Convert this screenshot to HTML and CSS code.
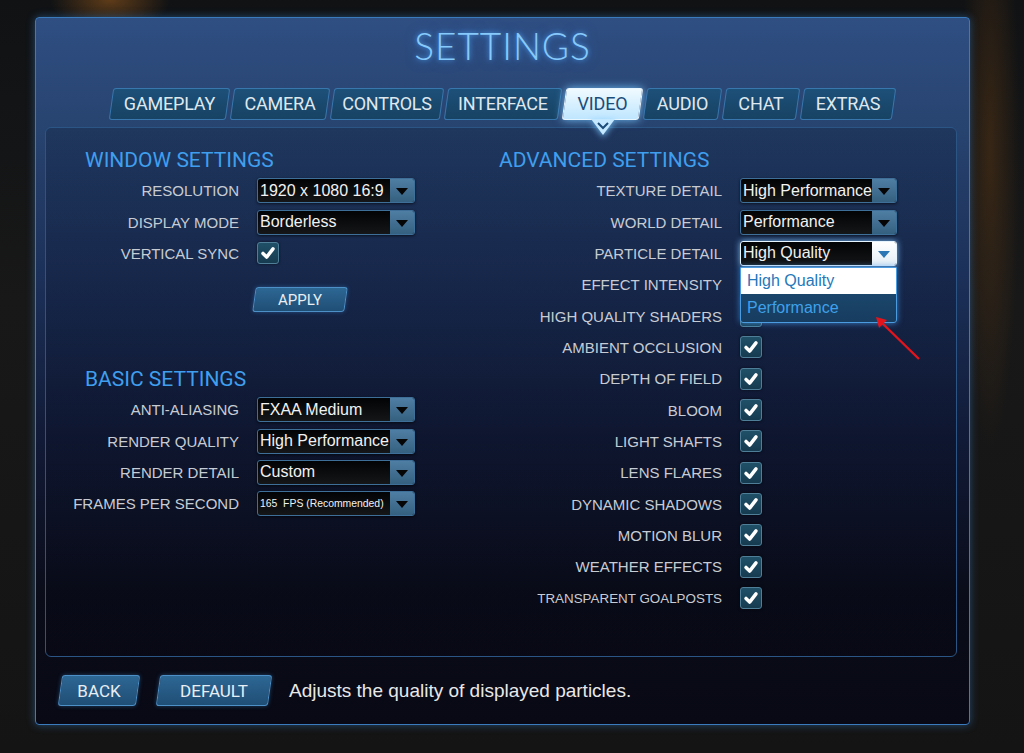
FILE: index.html
```html
<!DOCTYPE html>
<html lang="en">
<head>
    <meta charset="UTF-8">
    <meta name="viewport" content="width=device-width, initial-scale=1.0">
    <title>Settings</title>
    <link rel="stylesheet" href="styles.css">
</head>
<body>

<div class="window">
    <h1 class="title">SETTINGS</h1>

    <!-- Tabs -->
    <div class="tabs">
        <div class="tab" style="width:117px">GAMEPLAY</div>
        <div class="tab" style="width:96px">CAMERA</div>
        <div class="tab" style="width:110px">CONTROLS</div>
        <div class="tab" style="width:114px">INTERFACE</div>
        <div class="tab active" style="width:77px">VIDEO
            <svg class="notch" viewBox="0 0 24 16" width="24" height="16">
                <polygon points="0,0 24,0 12,16"/>
                <polyline points="7,4 12,9 17,4"/>
            </svg>
        </div>
        <div class="tab" style="width:75px">AUDIO</div>
        <div class="tab" style="width:74px">CHAT</div>
        <div class="tab" style="width:92px">EXTRAS</div>
    </div>

    <!-- Panel -->
    <div class="panel">
        <div class="column left">
            <h2 class="heading">WINDOW SETTINGS</h2>
            <div class="row"><span class="label">RESOLUTION</span><div class="select"><span>1920 x 1080 16:9</span><i class="arrow"></i></div></div>
            <div class="row"><span class="label">DISPLAY MODE</span><div class="select"><span>Borderless</span><i class="arrow"></i></div></div>
            <div class="row"><span class="label">VERTICAL SYNC</span><div class="check"><svg viewBox="0 0 22 22"><path d="M5.5 11.5 L9.5 15.5 L16.5 6.5"/></svg></div></div>
            <div class="apply-wrap"><button class="btn apply">APPLY</button></div>

            <h2 class="heading basic">BASIC SETTINGS</h2>
            <div class="row"><span class="label">ANTI-ALIASING</span><div class="select"><span>FXAA Medium</span><i class="arrow"></i></div></div>
            <div class="row"><span class="label">RENDER QUALITY</span><div class="select"><span>High Performance</span><i class="arrow"></i></div></div>
            <div class="row"><span class="label">RENDER DETAIL</span><div class="select"><span>Custom</span><i class="arrow"></i></div></div>
            <div class="row"><span class="label">FRAMES PER SECOND</span><div class="select small"><span>165&nbsp; FPS (Recommended)</span><i class="arrow"></i></div></div>
        </div>

        <div class="column right">
            <h2 class="heading">ADVANCED SETTINGS</h2>
            <div class="row"><span class="label">TEXTURE DETAIL</span><div class="select"><span>High Performance</span><i class="arrow"></i></div></div>
            <div class="row"><span class="label">WORLD DETAIL</span><div class="select"><span>Performance</span><i class="arrow"></i></div></div>
            <div class="row">
                <span class="label">PARTICLE DETAIL</span>
                <div class="select open">
                    <span>High Quality</span><i class="arrow"></i>
                    <div class="options">
                        <div class="option selected">High Quality</div>
                        <div class="option hover">Performance</div>
                    </div>
                </div>
            </div>
            <div class="row"><span class="label">EFFECT INTENSITY</span><div class="select"><span></span><i class="arrow"></i></div></div>
            <div class="row"><span class="label">HIGH QUALITY SHADERS</span><div class="check"><svg viewBox="0 0 22 22"><path d="M5.5 11.5 L9.5 15.5 L16.5 6.5"/></svg></div></div>
            <div class="row"><span class="label">AMBIENT OCCLUSION</span><div class="check"><svg viewBox="0 0 22 22"><path d="M5.5 11.5 L9.5 15.5 L16.5 6.5"/></svg></div></div>
            <div class="row"><span class="label">DEPTH OF FIELD</span><div class="check"><svg viewBox="0 0 22 22"><path d="M5.5 11.5 L9.5 15.5 L16.5 6.5"/></svg></div></div>
            <div class="row"><span class="label">BLOOM</span><div class="check"><svg viewBox="0 0 22 22"><path d="M5.5 11.5 L9.5 15.5 L16.5 6.5"/></svg></div></div>
            <div class="row"><span class="label">LIGHT SHAFTS</span><div class="check"><svg viewBox="0 0 22 22"><path d="M5.5 11.5 L9.5 15.5 L16.5 6.5"/></svg></div></div>
            <div class="row"><span class="label">LENS FLARES</span><div class="check"><svg viewBox="0 0 22 22"><path d="M5.5 11.5 L9.5 15.5 L16.5 6.5"/></svg></div></div>
            <div class="row"><span class="label">DYNAMIC SHADOWS</span><div class="check"><svg viewBox="0 0 22 22"><path d="M5.5 11.5 L9.5 15.5 L16.5 6.5"/></svg></div></div>
            <div class="row"><span class="label">MOTION BLUR</span><div class="check"><svg viewBox="0 0 22 22"><path d="M5.5 11.5 L9.5 15.5 L16.5 6.5"/></svg></div></div>
            <div class="row"><span class="label">WEATHER EFFECTS</span><div class="check"><svg viewBox="0 0 22 22"><path d="M5.5 11.5 L9.5 15.5 L16.5 6.5"/></svg></div></div>
            <div class="row"><span class="label narrow">TRANSPARENT GOALPOSTS</span><div class="check"><svg viewBox="0 0 22 22"><path d="M5.5 11.5 L9.5 15.5 L16.5 6.5"/></svg></div></div>
        </div>

        <!-- annotation arrow -->
        <svg class="pointer" viewBox="0 0 56 54" width="56" height="54">
            <line x1="50" y1="48" x2="11" y2="10"/>
            <polygon points="7,6 18,9 10,17"/>
        </svg>
    </div>

    <!-- Footer -->
    <div class="footer">
        <button class="btn back">BACK</button>
        <button class="btn default">DEFAULT</button>
        <span class="hint">Adjusts the quality of displayed particles.</span>
    </div>
</div>

</body>
</html>
```

FILE: styles.css
```css
:root {
    --label-color: #c7ccd4;
    --heading-color: #3f9fee;
    --tab-border: #3777ad;
    --panel-border: #2a5584;
}

body {
    margin: 0;
    width: 1024px;
    height: 753px;
    overflow: hidden;
    font-family: "Liberation Sans", Arial, sans-serif;
    background:
        radial-gradient(ellipse 60px 30px at 110px 0, rgba(190, 110, 30, 0.45), transparent),
        radial-gradient(ellipse 30px 300px at 990px 150px, rgba(120, 70, 20, 0.35), transparent),
        linear-gradient(#101214, #181818 40%, #141414);
}

.window {
    box-sizing: border-box;
    width: 935px;
    height: 708px;
    margin: 17px 0 0 35px;
    border: 1px solid #3a7bbd;
    border-radius: 4px;
    box-shadow: 0 0 8px rgba(60, 140, 220, 0.45);
    background: linear-gradient(to bottom, #2f4e82 0%, #27436f 16%, #1b2f57 38%, #111a36 60%, #0a0c19 82%, #080914 100%);
    display: flex;
    flex-direction: column;
}

.title {
    margin: 0;
    height: 70px;
    line-height: 56px;
    text-align: center;
    font-family: "Lato", "Inter", sans-serif;
    font-weight: 300;
    font-size: 37px;
    letter-spacing: 1px;
    color: #86c9fb;
    text-shadow: 0 0 5px rgba(80, 170, 255, 0.85), 0 0 12px rgba(60, 150, 255, 0.5);
}

/* Tabs */
.tabs {
    position: relative;
    z-index: 2;
    display: flex;
    justify-content: center;
    gap: 4px;
    height: 32px;
}

.tab {
    position: relative;
    z-index: 0;
    box-sizing: border-box;
    height: 32px;
    line-height: 32px;
    text-align: center;
    font-family: "Roboto", "Liberation Sans", sans-serif;
    font-size: 18px;
    letter-spacing: -0.2px;
    color: #dfe8ef;
}

.tab::before {
    content: '';
    position: absolute;
    inset: 0;
    z-index: -1;
    transform: skewX(-8deg);
    border: 1px solid var(--tab-border);
    border-radius: 3px;
    background: linear-gradient(#1d5079, #174263);
}

.tab.active {
    color: #1c4c78;
}

.tab.active::before {
    border-color: #e8f6ff;
    background: linear-gradient(#f0faff, #bfe6ff);
    box-shadow: 0 0 9px rgba(120, 200, 255, 0.9);
}

.notch {
    position: absolute;
    left: 50%;
    top: 31px;
    margin-left: -12px;
    filter: drop-shadow(0 2px 3px rgba(120, 200, 255, 0.8));
}

.notch polygon {
    fill: #c4e8ff;
}

.notch polyline {
    fill: none;
    stroke: #1c4c78;
    stroke-width: 2;
}

/* Panel */
.panel {
    position: relative;
    box-sizing: border-box;
    height: 530px;
    margin: 7px 12px 0 9px;
    padding: 19px 0 0 15px;
    border: 1px solid var(--panel-border);
    border-radius: 6px;
    background: linear-gradient(rgba(8, 16, 40, 0.25), rgba(4, 4, 14, 0.25));
    display: flex;
    gap: 84px;
}

.column {
    display: flex;
    flex-direction: column;
}

.left { width: 354px; }
.right { width: 398px; }

.heading {
    margin: 0 0 2px 0;
    height: 26px;
    line-height: 26px;
    font-family: "Roboto", "Liberation Sans", sans-serif;
    font-weight: 400;
    font-size: 21px;
    color: var(--heading-color);
}

.left .heading { padding-left: 24px; }

.heading.basic {
    margin-top: 54px;
}

.row {
    display: flex;
    align-items: center;
    height: 31.35px;
}

.label {
    text-align: right;
    font-size: 15px;
    color: var(--label-color);
}

.label.narrow { font-size: 13.4px; }

.left .label { width: 178px; margin-right: 18px; }
.right .label { width: 223px; margin-right: 18px; }

/* Dropdown */
.select {
    position: relative;
    box-sizing: border-box;
    width: 158px;
    height: 25px;
    display: flex;
    align-items: center;
    border: 1px solid #3d6f98;
    border-radius: 3px;
    background: linear-gradient(#020304, #141618);
    box-shadow: 0 1px 3px rgba(0, 0, 0, 0.6);
    color: #f2f2f2;
    font-size: 16px;
}

.right .select { width: 157px; }

.select span {
    flex: 1;
    padding-left: 2px;
    white-space: nowrap;
    overflow: hidden;
}

.select.small { font-size: 10.4px; }

.select .arrow {
    align-self: stretch;
    width: 24px;
    position: relative;
    background: linear-gradient(#4f7ea4, #35607f);
    border-radius: 0 2px 2px 0;
}

.select .arrow::after {
    content: '';
    position: absolute;
    left: 6px;
    top: 9px;
    border-left: 6px solid transparent;
    border-right: 6px solid transparent;
    border-top: 7px solid #050505;
}

.select.open {
    border-color: #e6f4ff;
    box-shadow: 0 0 6px rgba(130, 200, 255, 0.9);
}

.select.open .arrow {
    background: linear-gradient(#ffffff, #e4eef6);
}

.select.open .arrow::after {
    border-top-color: #2b76b4;
}

.options {
    position: absolute;
    z-index: 2;
    top: 25px;
    left: -1px;
    right: -1px;
    border: 1px solid #4a9be0;
    border-radius: 0 0 3px 3px;
    box-shadow: 0 0 6px rgba(70, 150, 230, 0.8);
    background: linear-gradient(#1e4d75, #173d60);
}

.option {
    height: 28px;
    line-height: 28px;
    padding-left: 6px;
    font-size: 16px;
    color: #3ea1ea;
}

.option.selected {
    height: 26px;
    line-height: 26px;
    background: #ffffff;
    color: #2578ba;
}

/* Checkbox */
.check {
    box-sizing: border-box;
    width: 22px;
    height: 22px;
    border: 1px solid #4f7f98;
    border-radius: 3px;
    background: linear-gradient(#1f5068, #163b50);
    box-shadow: 0 0 3px rgba(0, 0, 0, 0.6);
}

.check svg {
    display: block;
    width: 20px;
    height: 20px;
}

.check path {
    fill: none;
    stroke: #ffffff;
    stroke-width: 3.8;
    stroke-linecap: round;
    stroke-linejoin: round;
}

/* Buttons */
.btn {
    position: relative;
    z-index: 0;
    border: none;
    background: none;
    padding: 0;
    font-family: "Roboto", "Liberation Sans", sans-serif;
    color: #e8eef4;
    cursor: pointer;
}

.btn::before {
    content: '';
    position: absolute;
    inset: 0;
    z-index: -1;
    transform: skewX(-8deg);
    border: 1px solid #4d90c8;
    border-radius: 3px;
    background: linear-gradient(#2d6794, #1f4e75);
    box-shadow: 0 0 4px rgba(70, 150, 220, 0.4);
}

.apply-wrap {
    padding: 18px 0 0 193px;
}

.apply {
    width: 92px;
    height: 25px;
    font-size: 15px;
}

.footer {
    flex: 1;
    display: flex;
    align-items: center;
    padding-left: 24px;
}

.back {
    width: 78px;
    height: 31px;
    font-size: 17px;
    margin-right: 20px;
}

.default {
    width: 112px;
    height: 31px;
    font-size: 17px;
    margin-right: 19px;
}

.hint {
    font-size: 19px;
    color: #e8e8e8;
}

/* Red annotation arrow */
.pointer {
    position: absolute;
    z-index: 3;
    left: 823px;
    top: 183px;
}

.pointer line {
    stroke: #e3141b;
    stroke-width: 2.4;
}

.pointer polygon {
    fill: #e3141b;
}
```
